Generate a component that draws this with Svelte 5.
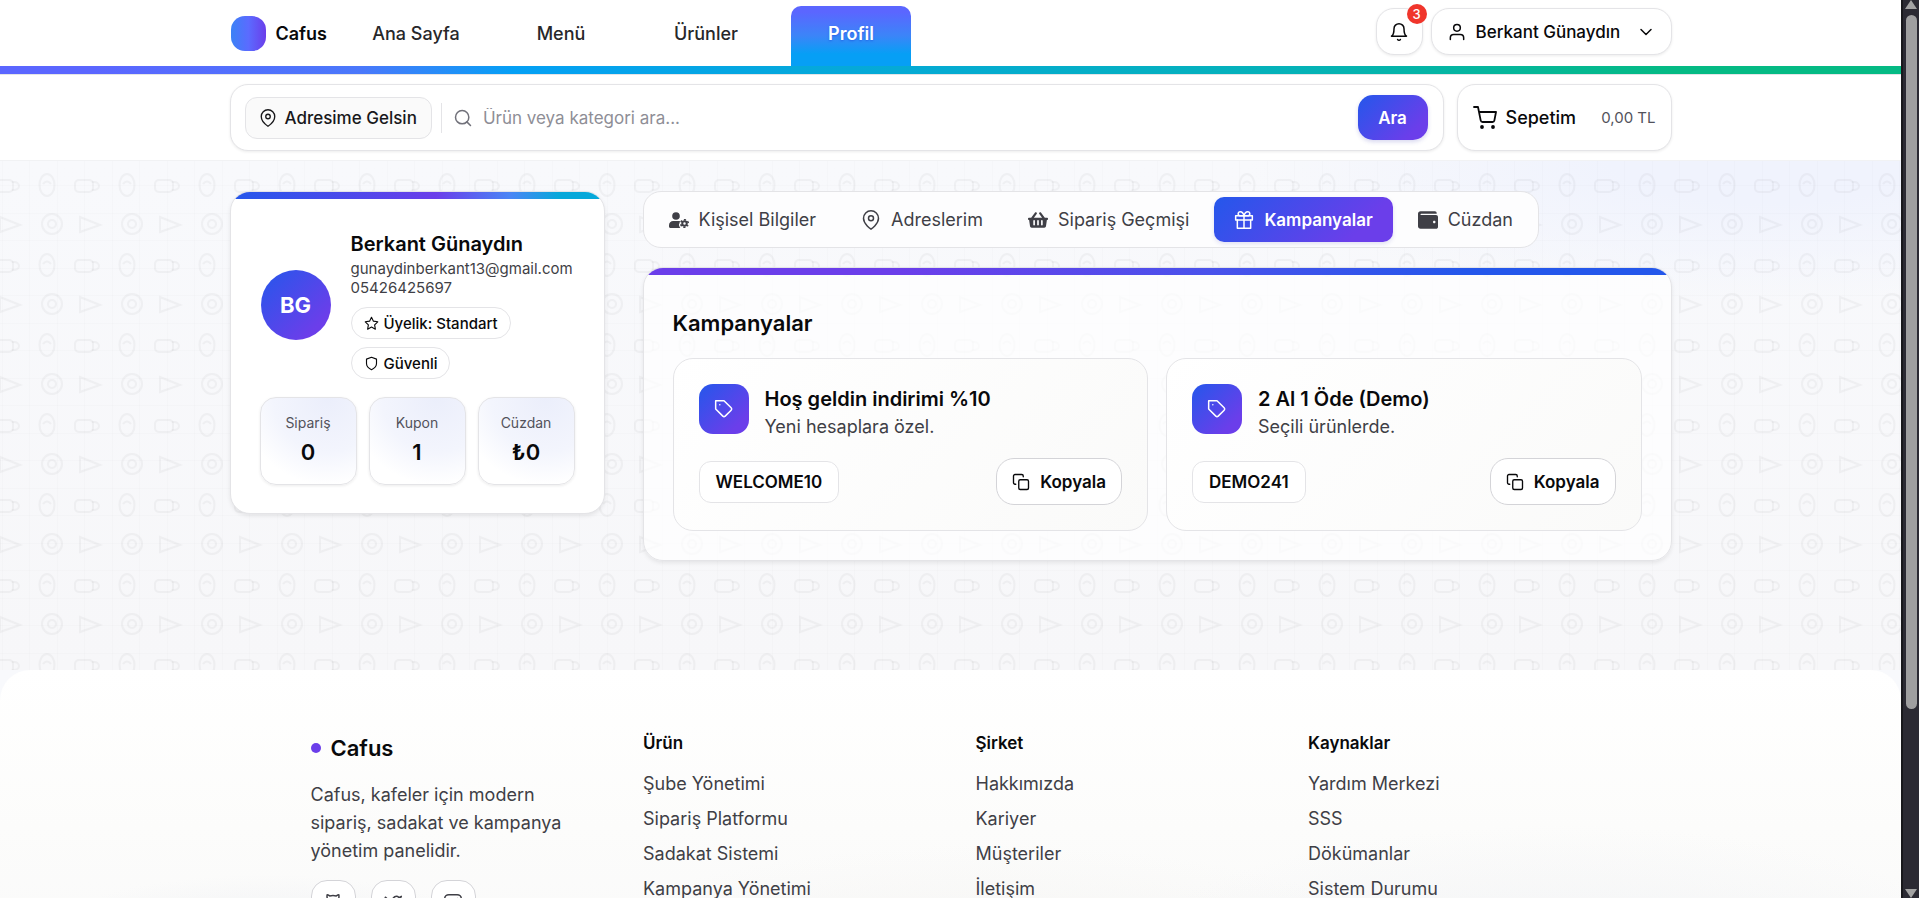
<script>
	const navItems = ['Ana Sayfa', 'Menü', 'Ürünler', 'Profil'];
	let activeNav = $state('Profil');

	const tabs = [
		{ label: 'Kişisel Bilgiler', icon: 'userCog' },
		{ label: 'Adreslerim', icon: 'pin' },
		{ label: 'Sipariş Geçmişi', icon: 'basket' },
		{ label: 'Kampanyalar', icon: 'gift' },
		{ label: 'Cüzdan', icon: 'wallet' }
	];
	let activeTab = $state('Kampanyalar');

	const stats = [
		{ label: 'Sipariş', value: '0' },
		{ label: 'Kupon', value: '1' },
		{ label: 'Cüzdan', value: '₺0' }
	];

	const campaigns = [
		{ title: 'Hoş geldin indirimi %10', text: 'Yeni hesaplara özel.', code: 'WELCOME10' },
		{ title: '2 Al 1 Öde (Demo)', text: 'Seçili ürünlerde.', code: 'DEMO241' }
	];

	const footerColumns = [
		{ title: 'Ürün', links: ['Şube Yönetimi', 'Sipariş Platformu', 'Sadakat Sistemi', 'Kampanya Yönetimi'] },
		{ title: 'Şirket', links: ['Hakkımızda', 'Kariyer', 'Müşteriler', 'İletişim'] },
		{ title: 'Kaynaklar', links: ['Yardım Merkezi', 'SSS', 'Dökümanlar', 'Sistem Durumu'] }
	];

	const socials = [
		{ label: 'GitHub', icon: 'github' },
		{ label: 'Twitter', icon: 'twitter' },
		{ label: 'Instagram', icon: 'instagram' }
	];

	let query = $state('');

	const copyCode = (code) => navigator.clipboard?.writeText(code);

	// outline icons, 24x24
	const icons = {
		bell: '<path d="M6 8a6 6 0 0 1 12 0c0 7 3 9 3 9H3s3-2 3-9"/><path d="M10.3 21a1.94 1.94 0 0 0 3.4 0"/>',
		user: '<path d="M20 21v-2a4 4 0 0 0-4-4H8a4 4 0 0 0-4 4v2"/><circle cx="12" cy="7" r="4"/>',
		chevron: '<path d="m6 9 6 6 6-6"/>',
		pin: '<path d="M21 10c0 7-9 13-9 13s-9-6-9-13a9 9 0 0 1 18 0z"/><circle cx="12" cy="10" r="3"/>',
		search: '<circle cx="11" cy="11" r="8"/><path d="m21 21-4.35-4.35"/>',
		cart: '<circle cx="9" cy="21" r="1"/><circle cx="20" cy="21" r="1"/><path d="M1 1h4l2.68 13.39a2 2 0 0 0 2 1.61h9.72a2 2 0 0 0 2-1.61L23 6H6"/>',
		star: '<path d="m12 2 3.09 6.26L22 9.27l-5 4.87 1.18 6.88L12 17.77l-6.18 3.25L7 14.14 2 9.27l6.91-1.01z"/>',
		shield: '<path d="M12 22s8-4 8-10V5l-8-3-8 3v7c0 6 8 10 8 10z"/>',
		gift: '<path d="M20 12v10H4V12"/><path d="M2 7h20v5H2z"/><path d="M12 22V7"/><path d="M12 7H7.5a2.5 2.5 0 0 1 0-5C11 2 12 7 12 7z"/><path d="M12 7h4.5a2.5 2.5 0 0 0 0-5C13 2 12 7 12 7z"/>',
		tag: '<path d="M20.59 13.41l-7.17 7.17a2 2 0 0 1-2.83 0L2 12V2h10l8.59 8.59a2 2 0 0 1 0 2.82z"/><path d="M7 7h.01"/>',
		copy: '<rect x="9" y="9" width="13" height="13" rx="2"/><path d="M5 15H4a2 2 0 0 1-2-2V4a2 2 0 0 1 2-2h9a2 2 0 0 1 2 2v1"/>',
		github: '<path d="M15 22v-4a4.8 4.8 0 0 0-1-3.5c3 0 6-2 6-5.5.08-1.25-.27-2.48-1-3.5.28-1.15.28-2.35 0-3.5 0 0-1 0-3 1.5-2.64-.5-5.36-.5-8 0C6 2 5 2 5 2c-.3 1.15-.3 2.35 0 3.5A5.4 5.4 0 0 0 4 9c0 3.5 3 5.5 6 5.5-.39.49-.68 1.05-.85 1.65S8.93 17.38 9 18v4"/><path d="M9 18c-4.51 2-5-2-7-2"/>',
		twitter: '<path d="M22 4s-.7 2.1-2 3.4c1.6 10-9.4 17.3-18 11.6 2.2.1 4.4-.6 6-2C3 15.5.5 9.6 3 5c2.2 2.6 5.6 4.1 9 4-.9-4.2 4-6.6 7-3.8 1.1 0 3-1.2 3-1.2z"/>',
		instagram: '<rect x="2" y="2" width="20" height="20" rx="5"/><path d="M16 11.37A4 4 0 1 1 12.63 8 4 4 0 0 1 16 11.37z"/><path d="M17.5 6.5h.01"/>'
	};

	// filled icons keep their own viewBox
	const solidIcons = {
		userCog: {
			box: '0 0 640 512',
			body: '<circle cx="224" cy="128" r="122"/><path d="M0 464v-42c0-74 60-134 134-134h180c14 0 28 2 41 6-9 15-14 33-14 51 0 12-5 22-14 34-19 30-5 72 20 105 8 10 12 20 17 28H48c-26 0-48-22-48-48z"/><circle cx="496" cy="368" r="72" fill="none" stroke="currentColor" stroke-width="64"/><circle cx="496" cy="368" r="122" fill="none" stroke="currentColor" stroke-width="50" stroke-dasharray="64 63.8" stroke-dashoffset="32" transform="rotate(30 496 368)"/>'
		},
		basket: {
			box: '0 0 576 512',
			body: '<path d="M576 216v16c0 13.255-10.745 24-24 24h-8l-26.113 182.788C514.509 462.435 494.257 480 470.37 480H105.63c-23.887 0-44.139-17.565-47.518-41.212L32 256h-8c-13.255 0-24-10.745-24-24v-16c0-13.255 10.745-24 24-24h67.341l106.78-146.821c10.395-14.292 30.407-17.453 44.701-7.058 14.293 10.395 17.453 30.408 7.058 44.701L170.477 192h235.046L326.12 82.821c-10.395-14.292-7.234-34.306 7.059-44.701 14.291-10.395 34.306-7.235 44.701 7.058L484.659 192H552c13.255 0 24 10.745 24 24zM312 392V280c0-13.255-10.745-24-24-24s-24 10.745-24 24v112c0 13.255 10.745 24 24 24s24-10.745 24-24zm112 0V280c0-13.255-10.745-24-24-24s-24 10.745-24 24v112c0 13.255 10.745 24 24 24s24-10.745 24-24zm-224 0V280c0-13.255-10.745-24-24-24s-24 10.745-24 24v112c0 13.255 10.745 24 24 24s24-10.745 24-24z"/>'
		},
		wallet: {
			box: '0 0 512 512',
			body: '<path d="M461.2 128H80c-8.84 0-16-7.16-16-16s7.16-16 16-16h384c8.84 0 16-7.16 16-16 0-26.51-21.49-48-48-48H64C28.65 32 0 60.65 0 96v320c0 35.35 28.65 64 64 64h397.2c28.02 0 50.8-21.53 50.8-48V176c0-26.47-22.78-48-50.8-48zM416 336c-17.67 0-32-14.33-32-32s14.33-32 32-32 32 14.33 32 32-14.33 32-32 32z"/>'
		}
	};
</script>

{#snippet icon(name, size)}
	{#if solidIcons[name]}
		<svg
			class="icon"
			width={size}
			height={size}
			viewBox={solidIcons[name].box}
			fill="currentColor"
			aria-hidden="true">
			{@html solidIcons[name].body}
		</svg>
	{:else}
		<svg
			class="icon"
			width={size}
			height={size}
			viewBox="0 0 24 24"
			fill="none"
			stroke="currentColor"
			stroke-width="1.8"
			stroke-linecap="round"
			stroke-linejoin="round"
			aria-hidden="true">
			{@html icons[name]}
		</svg>
	{/if}
{/snippet}

<div class="window">
	<div class="page">
		<header class="header">
			<div class="container topbar">
				<a class="brand" href="#home"><span class="brand-mark"></span>Cafus</a>
				<nav class="nav" aria-label="Ana menü">
					{#each navItems as item}
						<a
							class="nav-link"
							class:nav-link--active={item === activeNav}
							href={`#${item}`}
							onclick={() => (activeNav = item)}>{item}</a>
					{/each}
				</nav>
				<div class="account">
					<button class="round-button bell" aria-label="Bildirimler">
						{@render icon('bell', 20)}
						<span class="badge">3</span>
					</button>
					<button class="round-button user-button">
						{@render icon('user', 20)}
						<span class="user-name">Berkant Günaydın</span>
						{@render icon('chevron', 20)}
					</button>
				</div>
			</div>
			<div class="rainbow"></div>
			<div class="container search-row">
				<form class="search" onsubmit={(e) => e.preventDefault()}>
					<button class="address" type="button">{@render icon('pin', 18)}Adresime Gelsin</button>
					<label class="search-field">
						{@render icon('search', 20)}
						<input type="text" aria-label="Ara" placeholder="Ürün veya kategori ara..." bind:value={query} />
					</label>
					<button class="search-button" type="submit">Ara</button>
				</form>
				<button class="cart">
					{@render icon('cart', 24)}
					<span class="cart-label">Sepetim</span>
					<span class="cart-total">0,00 TL</span>
				</button>
			</div>
		</header>

		<main class="main">
			<div class="container content">
				<aside class="profile">
					<div class="profile-head">
						<div class="avatar">BG</div>
						<div class="profile-info">
							<h2>Berkant Günaydın</h2>
							<p>gunaydinberkant13@gmail.com</p>
							<p>05426425697</p>
							<div class="chips">
								<span class="chip">{@render icon('star', 15)}Üyelik: Standart</span>
								<span class="chip">{@render icon('shield', 15)}Güvenli</span>
							</div>
						</div>
					</div>
					<div class="stats">
						{#each stats as stat}
							<div class="stat">
								<span>{stat.label}</span>
								<strong>{stat.value}</strong>
							</div>
						{/each}
					</div>
				</aside>

				<section class="details">
					<div class="tabs" role="tablist">
						{#each tabs as tab}
							<button
								class="tab"
								class:tab--active={tab.label === activeTab}
								role="tab"
								aria-selected={tab.label === activeTab}
								onclick={() => (activeTab = tab.label)}>
								{@render icon(tab.icon, 20)}{tab.label}
							</button>
						{/each}
					</div>
					<div class="panel">
						<h1>Kampanyalar</h1>
						<div class="campaigns">
							{#each campaigns as campaign}
								<article class="campaign">
									<div class="campaign-head">
										<span class="campaign-icon">{@render icon('tag', 20)}</span>
										<div>
											<h3>{campaign.title}</h3>
											<p>{campaign.text}</p>
										</div>
									</div>
									<div class="campaign-foot">
										<span class="code">{campaign.code}</span>
										<button class="copy" onclick={() => copyCode(campaign.code)}>
											{@render icon('copy', 18)}Kopyala
										</button>
									</div>
								</article>
							{/each}
						</div>
					</div>
				</section>
			</div>
		</main>

		<footer class="footer">
			<div class="footer-grid">
				<div class="footer-about">
					<div class="footer-brand">Cafus</div>
					<p>Cafus, kafeler için modern sipariş, sadakat ve kampanya yönetim panelidir.</p>
					<div class="socials">
						{#each socials as social}
							<a href={`#${social.icon}`} aria-label={social.label}>{@render icon(social.icon, 20)}</a>
						{/each}
					</div>
				</div>
				{#each footerColumns as column}
					<div class="footer-column">
						<h4>{column.title}</h4>
						<ul>
							{#each column.links as link}
								<li><a href={`#${link}`}>{link}</a></li>
							{/each}
						</ul>
					</div>
				{/each}
			</div>
		</footer>
	</div>

	<div class="scrollbar" aria-hidden="true">
		<span class="arrow arrow--up"></span>
		<span class="track"><span class="thumb"></span></span>
		<span class="arrow arrow--down"></span>
	</div>
</div>

<style>
	:global(body) {
		margin: 0;
		font-family: Inter, 'Liberation Sans', sans-serif;
		color: #09090b;
	}

	* {
		box-sizing: border-box;
	}

	h1,
	h2,
	h3,
	h4,
	p,
	ul {
		margin: 0;
		padding: 0;
	}

	button,
	input {
		font: inherit;
		color: inherit;
	}

	button {
		cursor: pointer;
	}

	a {
		color: inherit;
		text-decoration: none;
	}

	.icon {
		flex: none;
	}

	.window {
		--blue: #2457eb;
		--violet: #6b3eea;
		--line: #e4e4e7;
		--muted: #3f3f46;

		display: grid;
		grid-template-columns: 1fr 18px;
		height: 100vh;
		overflow: hidden;
	}

	.page {
		display: flex;
		flex-direction: column;
		min-width: 0;
		overflow: auto;
		scrollbar-width: none;
		background: #f8f9fc;
	}

	.container {
		width: 100%;
		max-width: 1442px;
		margin: 0 auto;
	}

	/* header */
	.header {
		flex: none;
		background: #fff;
		border-bottom: 1px solid #f1f2f4;
	}

	.topbar {
		display: flex;
		align-items: flex-end;
		height: 66px;
	}

	.brand {
		display: flex;
		align-items: center;
		gap: 10px;
		height: 66px;
		padding-left: 1px;
		margin-right: 29px;
		font-size: 18px;
		font-weight: 600;
	}

	.brand-mark {
		width: 35px;
		height: 35px;
		border-radius: 14px;
		background: linear-gradient(90deg, #3b82f6, #5b6bff 50%, #6b3eea);
	}

	.nav {
		display: flex;
		gap: 25px;
	}

	.nav-link {
		display: flex;
		align-items: center;
		justify-content: center;
		width: 120px;
		height: 60px;
		padding-bottom: 5px;
		border-radius: 10px 10px 0 0;
		font-size: 18px;
		font-weight: 500;
		color: #27272a;
	}

	.nav-link--active {
		background: linear-gradient(180deg, #5b66ff 10%, #3b85f8 50%, #069ff5 80%);
		color: #fff;
		font-weight: 600;
		text-shadow: 0 1px 2px rgba(29, 78, 216, 0.6);
	}

	.account {
		display: flex;
		gap: 8px;
		align-self: flex-start;
		margin: 8px 0 0 auto;
	}

	.round-button {
		display: flex;
		align-items: center;
		justify-content: center;
		height: 47px;
		border: 1px solid var(--line);
		border-radius: 18px;
		background: #fff;
		box-shadow: 0 1px 3px rgba(0, 0, 0, 0.08);
		font-size: 17px;
		font-weight: 500;
	}

	.bell {
		position: relative;
		width: 47px;
		padding: 0;
	}

	.badge {
		position: absolute;
		top: -5px;
		right: -5px;
		width: 20px;
		height: 20px;
		border-radius: 50%;
		background: #f0352b;
		color: #fff;
		font-size: 13px;
		line-height: 20px;
		font-weight: 500;
		text-align: center;
	}

	.user-button {
		gap: 9px;
		width: 241px;
		padding: 0 15px;
	}

	.user-name {
		flex: 1;
		text-align: left;
	}

	.rainbow {
		height: 8px;
		background: linear-gradient(90deg, #5b66ff 5%, #4a78fb 19%, #05a0f5 27%, #05a8dc 42%, #05b2b8 68%, #05ba84 88%);
		box-shadow: 0 1px 0 #e4e4e7;
	}

	.search-row {
		display: flex;
		gap: 13px;
		padding: 10px 0 9px;
	}

	.search,
	.cart {
		display: flex;
		align-items: center;
		height: 67px;
		border: 1px solid var(--line);
		border-radius: 18px;
		background: #fff;
		box-shadow: 0 1px 3px rgba(0, 0, 0, 0.08);
	}

	.search {
		flex: 1;
		gap: 9px;
		padding: 0 15px 0 14px;
	}

	.address {
		display: flex;
		align-items: center;
		gap: 8px;
		height: 42px;
		padding: 0 14px 0 13px;
		border: 1px solid var(--line);
		border-radius: 12px;
		background: #fafafa;
		font-size: 17px;
		font-weight: 500;
		color: #18181b;
	}

	.search-field {
		display: flex;
		flex: 1;
		align-items: center;
		gap: 10px;
		height: 30px;
		padding-left: 11px;
		border-left: 1px solid var(--line);
		color: #71717a;
	}

	.search-field input {
		flex: 1;
		padding: 0;
		border: 0;
		outline: 0;
		background: none;
		font-size: 17px;
	}

	.search-field input::placeholder {
		color: #8e8e96;
	}

	.search-button {
		width: 70px;
		height: 45px;
		border: 0;
		border-radius: 15px;
		background: linear-gradient(135deg, var(--blue), var(--violet) 80%);
		box-shadow: 0 2px 4px rgba(60, 60, 180, 0.2);
		color: #fff;
		font-size: 17px;
		font-weight: 600;
	}

	.cart {
		width: 215px;
		gap: 9px;
		padding: 0 15px;
	}

	.cart-label {
		font-size: 18px;
		font-weight: 500;
	}

	.cart-total {
		margin-left: auto;
		font-size: 15px;
		color: #52525b;
	}

	/* main area, tiled with cafe doodles over a fine grid */
	.main {
		flex: none;
		min-height: 509px;
		padding: 30px 0 108px;
		background:
			url("data:image/svg+xml,%3Csvg xmlns='http://www.w3.org/2000/svg' width='80' height='80' fill='none' stroke='%23000' stroke-opacity='.035' stroke-width='2'%3E%3Cellipse cx='17' cy='24' rx='7.5' ry='11'/%3E%3Cpath d='M13 23q4-5 8 0'/%3E%3Crect x='45' y='19' width='18' height='12' rx='4'/%3E%3Cpath d='M62 21h2a5 4 0 0 1 0 8h-2'/%3E%3Ccircle cx='22' cy='63' r='10'/%3E%3Ccircle cx='22' cy='63' r='4'/%3E%3Cpath d='M50 56v15l20-7z'/%3E%3C/svg%3E") 30px 0 / 80px 80px,
			linear-gradient(90deg, rgba(0, 0, 0, 0.01) 1px, transparent 1px 27px, rgba(0, 0, 0, 0.01) 27px 28px, transparent 28px) 2px 0 / 55px 55px,
			linear-gradient(180deg, rgba(0, 0, 0, 0.01) 1px, transparent 1px 27px, rgba(0, 0, 0, 0.01) 27px 28px, transparent 28px) 0 52px / 55px 55px,
			radial-gradient(ellipse 520px 140px at 93% 0, #f0f3fd 30%, transparent),
			linear-gradient(180deg, #f8f9fc, #f7f7f9);
	}

	.content {
		display: grid;
		grid-template-columns: 375px 1fr;
		align-items: start;
		gap: 38px;
	}

	.profile,
	.panel {
		border: 1px solid var(--line);
		border-radius: 20px;
		box-shadow: 0 2px 4px rgba(0, 0, 0, 0.08);
		overflow: hidden;
	}

	.profile {
		padding: 0 29px 28px;
		background: #fff;
	}

	.profile::before,
	.panel::before {
		content: '';
		display: block;
		height: 7px;
		margin: 0 -29px;
	}

	.profile::before {
		background: linear-gradient(90deg, var(--blue), var(--violet) 55%, #4a86f5 75%, #06a8da 88%);
	}

	.profile-head {
		display: flex;
		align-items: center;
		gap: 20px;
		padding: 31px 0 0 1px;
	}

	.avatar {
		display: grid;
		place-items: center;
		flex: none;
		width: 70px;
		height: 70px;
		border-radius: 50%;
		background: linear-gradient(135deg, var(--blue), var(--violet) 80%);
		color: #fff;
		font-size: 22px;
		font-weight: 700;
	}

	.profile-info h2 {
		font-size: 20px;
		line-height: 29px;
		font-weight: 600;
	}

	.profile-info p {
		font-size: 15px;
		line-height: 19px;
		color: var(--muted);
	}

	.chips {
		display: flex;
		flex-direction: column;
		align-items: flex-start;
		gap: 8px;
		margin-top: 10px;
	}

	.chip {
		display: flex;
		align-items: center;
		gap: 5px;
		height: 32px;
		padding: 0 12px;
		border: 1px solid var(--line);
		border-radius: 16px;
		font-size: 15px;
		font-weight: 500;
	}

	.stats {
		display: grid;
		grid-template-columns: repeat(3, 1fr);
		gap: 12px;
		margin-top: 18px;
	}

	.stat {
		display: flex;
		flex-direction: column;
		align-items: center;
		gap: 4px;
		height: 88px;
		padding-top: 14px;
		border: 1px solid var(--line);
		border-radius: 16px;
		background: radial-gradient(circle at 70% 0, #ebeefb, #f3f5fd 50%, #fff 80%);
		box-shadow: 0 1px 3px rgba(0, 0, 0, 0.08);
	}

	.stat span {
		font-size: 14px;
		line-height: 22px;
		color: #52525b;
	}

	.stat strong {
		font-size: 22px;
		line-height: 28px;
		font-weight: 600;
	}

	.details {
		display: flex;
		flex-direction: column;
		align-items: flex-start;
		gap: 19px;
	}

	.tabs {
		display: flex;
		align-items: center;
		gap: 5px;
		height: 57px;
		padding: 0 5px;
		border: 1px solid var(--line);
		border-radius: 18px;
		background: #fdfdfe;
	}

	.tab {
		display: flex;
		align-items: center;
		gap: 10px;
		height: 45px;
		padding: 0 20px;
		border: 0;
		border-radius: 10px;
		background: none;
		font-size: 18px;
		font-weight: 400;
		color: var(--muted);
	}

	.tab--active {
		background: linear-gradient(135deg, var(--blue), var(--violet) 80%);
		box-shadow: 0 2px 4px rgba(60, 60, 180, 0.15);
		color: #fff;
		font-size: 17px;
		font-weight: 600;
	}

	.panel {
		width: 100%;
		padding: 0 29px 29px;
		background: rgba(255, 255, 255, 0.7);
	}

	.panel::before {
		background: linear-gradient(90deg, var(--violet) 25%, #4a52eb 55%, var(--blue) 80%);
	}

	.panel h1 {
		padding: 31px 0 18px;
		font-size: 22px;
		line-height: 34px;
		font-weight: 600;
	}

	.campaigns {
		display: grid;
		grid-template-columns: 1fr 1fr;
		gap: 18px;
	}

	.campaign {
		padding: 25px;
		border: 1px solid var(--line);
		border-radius: 20px;
		background: linear-gradient(135deg, #fff, #fafaf9);
	}

	.campaign-head {
		display: flex;
		gap: 16px;
	}

	.campaign-icon {
		display: grid;
		place-items: center;
		width: 50px;
		height: 50px;
		border-radius: 14px;
		background: linear-gradient(135deg, var(--blue), var(--violet) 80%);
		color: #fff;
	}

	.campaign h3 {
		font-size: 20px;
		line-height: 30px;
		font-weight: 600;
	}

	.campaign p {
		font-size: 18px;
		line-height: 26px;
		color: var(--muted);
	}

	.campaign-foot {
		display: flex;
		align-items: center;
		justify-content: space-between;
		margin-top: 18px;
	}

	.code {
		height: 42px;
		padding: 0 16px;
		border: 1px solid var(--line);
		border-radius: 12px;
		background: #fff;
		font-size: 17px;
		line-height: 40px;
		font-weight: 600;
	}

	.copy {
		display: flex;
		align-items: center;
		gap: 10px;
		height: 47px;
		padding: 0 15px;
		border: 1px solid #d4d4d8;
		border-radius: 18px;
		background: #fff;
		font-size: 17px;
		font-weight: 600;
	}

	/* footer */
	.footer {
		flex: 1 0 auto;
		padding: 60px 0;
		border-radius: 30px 30px 0 0;
		background:
			radial-gradient(ellipse 220px 60px at 14% 84%, rgba(226, 229, 236, 0.4), transparent),
			radial-gradient(ellipse 460px 160px at 82% 100%, rgba(230, 233, 238, 0.45), transparent),
			radial-gradient(ellipse 460px 140px at 52% 100%, rgba(240, 239, 236, 0.6), transparent),
			linear-gradient(180deg, #fff, #fcfcfb 50%, #f9f9f9);
	}

	.footer-grid {
		display: grid;
		grid-template-columns: repeat(4, 1fr);
		gap: 50px;
		max-width: 1280px;
		margin: 0 auto;
	}

	.footer-brand {
		display: flex;
		align-items: center;
		gap: 10px;
		font-size: 22px;
		line-height: 36px;
		font-weight: 600;
	}

	.footer-brand::before {
		content: '';
		width: 10px;
		height: 10px;
		border-radius: 50%;
		background: var(--violet);
	}

	.footer-about p {
		max-width: 260px;
		margin-top: 15px;
		font-size: 18px;
		line-height: 28px;
		color: var(--muted);
	}

	.socials {
		display: flex;
		gap: 15px;
		margin-top: 15px;
	}

	.socials a {
		display: grid;
		place-items: center;
		width: 45px;
		height: 45px;
		border: 1px solid #d4d4d8;
		border-radius: 16px;
		background: #fff;
		color: var(--muted);
	}

	.footer-column h4 {
		font-size: 17px;
		line-height: 26px;
		font-weight: 600;
	}

	.footer-column ul {
		margin-top: 10px;
		list-style: none;
	}

	.footer-column li {
		font-size: 18px;
		line-height: 35px;
		color: var(--muted);
	}

	/* window scrollbar */
	.scrollbar {
		display: flex;
		flex-direction: column;
		align-items: center;
		gap: 6px;
		background: #2b2a33;
		border-left: 2px solid #18181c;
	}

	.arrow {
		border: 6px solid transparent;
		border-top-width: 0;
		border-bottom: 9px solid #a3a3a3;
	}

	.arrow--down {
		border-top: 9px solid #a3a3a3;
		border-bottom-width: 0;
	}

	.track {
		flex: 1;
	}

	.thumb {
		display: block;
		width: 11px;
		height: 80%;
		border-radius: 6px;
		background: #9f9fa0;
	}
</style>
